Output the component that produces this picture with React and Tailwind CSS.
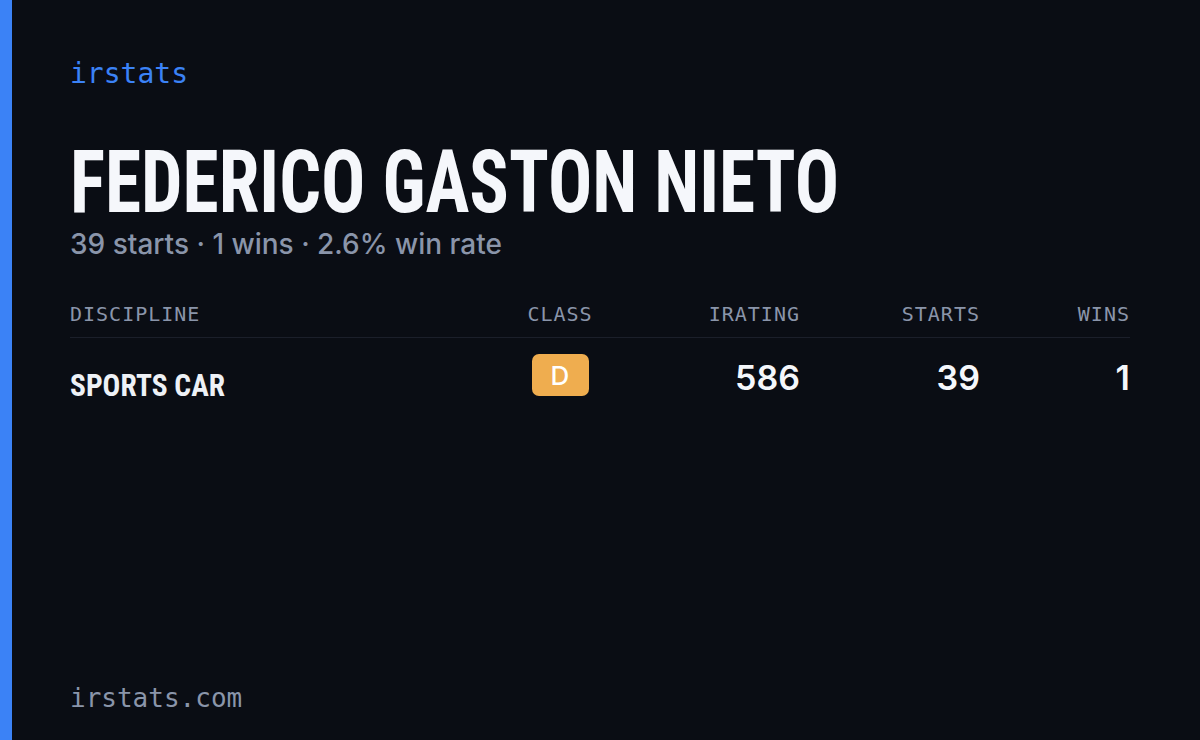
const stats = [
  { discipline: 'Sports Car', cls: 'D', irating: 586, starts: 39, wins: 1 },
];

const mono = "font-['DejaVu_Sans_Mono','Liberation_Mono',monospace]";
const cond = "font-['Roboto_Condensed','DejaVu_Sans_Condensed',sans-serif]";

export default function App() {
  return (
    <div className="flex w-full h-[740px] bg-[#0a0d14] overflow-hidden">
      {/* accent bar */}
      <div className="w-3 shrink-0 bg-[#3b82f6]" />

      <div className="flex flex-col flex-1 pl-[58px] pr-[70px] pt-[57px] pb-[26px]">
        <div className={`${mono} text-[28px] leading-[34px] text-[#3b82f6]`}>irstats</div>

        <h1
          className={`${cond} mt-[48px] text-[87px] leading-[87px] font-bold uppercase text-[#f5f7fb] whitespace-nowrap origin-left scale-x-[0.845]`}
        >
          Federico Gaston Nieto
        </h1>

        <p className="mt-px font-['Inter',sans-serif] text-[28px] leading-[34px] font-medium text-[#8a95aa]">
          39 starts · 1 wins · 2.6% win rate
        </p>

        {/* table */}
        <div className="mt-[41px]">
          <div
            className={`${mono} grid grid-cols-[430px_120px_180px_180px_150px] pb-[11px] border-b border-[#1b1f2a] text-[20px] leading-[24px] tracking-[0.05em] uppercase text-[#8a95aa]`}
          >
            <div>Discipline</div>
            <div className="text-center">Class</div>
            <div className="text-right">iRating</div>
            <div className="text-right">Starts</div>
            <div className="text-right">Wins</div>
          </div>

          {stats.map((row) => (
            <div key={row.discipline} className="grid grid-cols-[430px_120px_180px_180px_150px] items-start pt-4">
              <div
                className={`${cond} mt-[15px] text-[32px] leading-[32px] font-bold uppercase text-[#eef1f6] whitespace-nowrap origin-left scale-x-[0.92]`}
              >
                {row.discipline}
              </div>
              <div className="flex justify-center">
                <span className="flex items-center justify-center w-[57px] h-[42px] rounded-[7px] bg-[#efad4f] font-['Inter',sans-serif] text-[26px] font-medium text-white">
                  {row.cls}
                </span>
              </div>
              <div className="mt-1 text-right font-['Inter',sans-serif] text-[34px] leading-[40px] font-semibold text-[#f5f7fb]">
                {row.irating}
              </div>
              <div className="mt-1 text-right font-['Inter',sans-serif] text-[34px] leading-[40px] font-semibold text-[#f5f7fb]">
                {row.starts}
              </div>
              <div className="mt-1 text-right font-['Inter',sans-serif] text-[34px] leading-[40px] font-semibold text-[#f5f7fb]">
                {row.wins}
              </div>
            </div>
          ))}
        </div>

        <div className={`${mono} mt-auto text-[26px] leading-[32px] text-[#8a95aa]`}>irstats.com</div>
      </div>
    </div>
  );
}
